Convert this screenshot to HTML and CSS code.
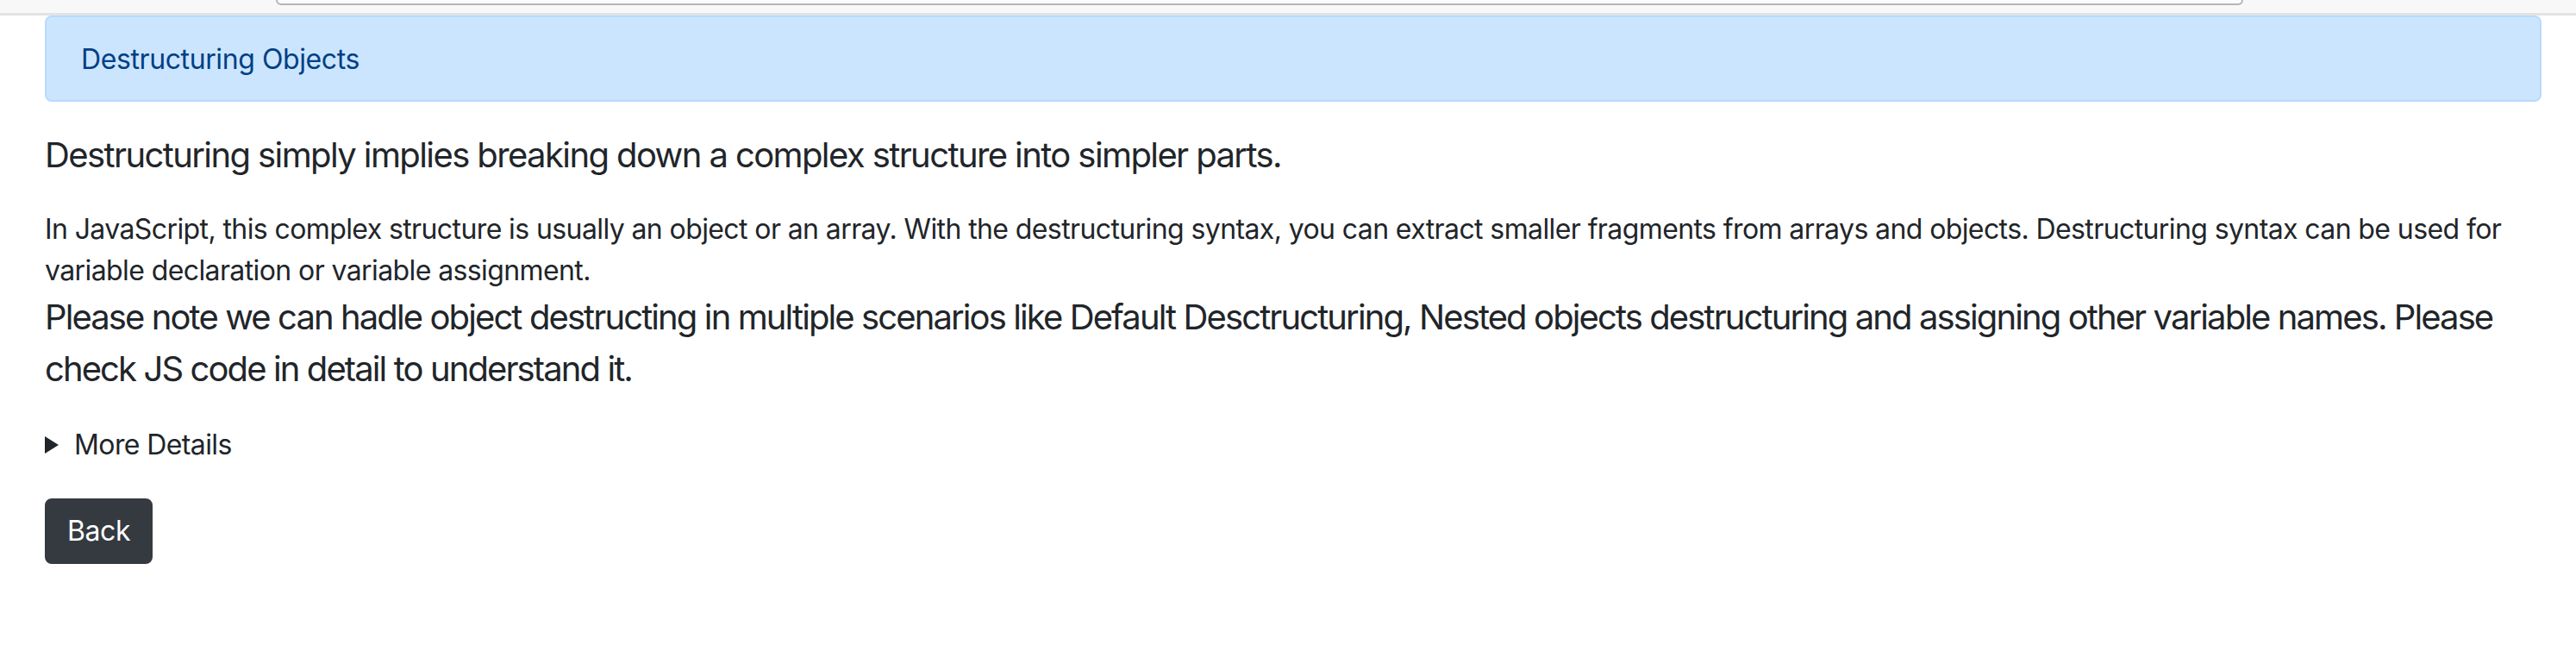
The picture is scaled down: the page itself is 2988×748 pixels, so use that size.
FILE: index.html
```html
<!DOCTYPE html>
<html lang="en">
<head>
<meta charset="utf-8">
<title>Destructuring Objects</title>
<link rel="stylesheet" href="styles.css">
</head>
<body>
<div class="topbar"><div class="urlbox"></div></div>
<main class="container">
  <div class="alert">Destructuring Objects</div>
  <p class="intro">Destructuring simply implies breaking down a complex structure into simpler parts.</p>
  <p class="body-text">In JavaScript, this complex structure is usually an object or an array. With the destructuring syntax, you can extract smaller fragments from arrays and objects. Destructuring syntax can be used for variable declaration or variable assignment.</p>
  <p class="note">Please note we can hadle object destructing in multiple scenarios like Default Desctructuring, Nested objects destructuring and assigning other variable names. Please check JS code in detail to understand it.</p>
  <details class="more">
    <summary class="more-summary"><span class="caret"></span>More Details</summary>
    <p class="body-text">Check the JS code in the console.</p>
  </details>
  <button class="btn" type="button">Back</button>
</main>
</body>
</html>
```

FILE: styles.css
```css
* { box-sizing: border-box; }
html, body { margin: 0; padding: 0; background: #fff; }
body {
  font-family: Inter, "Noto Sans", "Liberation Sans", sans-serif;
  font-size: 32px;
  line-height: 48px;
  letter-spacing: -0.6px;
  color: #212529;
}
.topbar {
  height: 18px;
  background: #f8f8f8;
  border-bottom: 3px solid #e3e3e3;
  padding: 0 386px 0 320px;
}
.urlbox {
  height: 6px;
  background: #fbfbfb;
  border: 2px solid #b5b5b5;
  border-top: 0;
  border-radius: 0 0 10px 10px;
}
.container {
  padding: 0 40px 0 52px;
}
.alert {
  background: #cce5ff;
  border: 2px solid #b8daff;
  color: #004085;
  border-radius: 8px;
  padding: 25px 40px 23px;
  margin: 0 0 32px 0;
  letter-spacing: -0.4px;
}
.intro {
  font-size: 40px;
  line-height: 60px;
  letter-spacing: -1.6px;
  margin: 0 0 32px 0;
}
.body-text {
  margin: 0;
}
.note {
  font-size: 40px;
  line-height: 60px;
  letter-spacing: -1.9px;
  margin: 0 0 32px 0;
}
.more { margin: 0 0 38px 0; padding-top: 2px; }
.more-summary {
  list-style: none;
  display: flex;
  align-items: center;
  gap: 18px;
  cursor: pointer;
}
.more-summary::-webkit-details-marker { display: none; }
.caret {
  width: 0;
  height: 0;
  border-top: 10px solid transparent;
  border-bottom: 10px solid transparent;
  border-left: 16px solid #212529;
}
.btn {
  font-family: inherit;
  font-size: 32px;
  line-height: 48px;
  letter-spacing: -0.4px;
  color: #fff;
  background: #343a40;
  border: 2px solid #343a40;
  border-radius: 8px;
  padding: 12px 24px;
  cursor: pointer;
}
```
